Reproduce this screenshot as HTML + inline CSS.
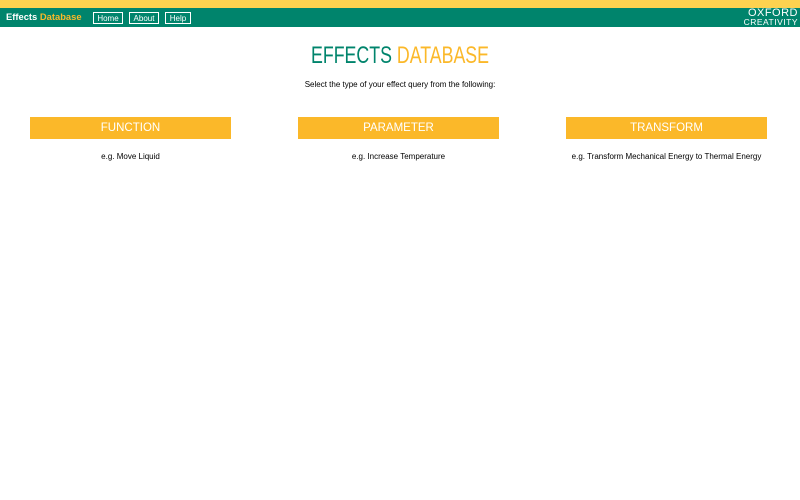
<!DOCTYPE html>
<html><head><style>
body{margin:0;width:800px;height:500px;background:#fff;font-family:"Liberation Sans",sans-serif;position:relative;overflow:hidden}
.top{position:absolute;left:0;top:0;width:800px;height:8px;background:#fdd250}
.nav{position:absolute;left:0;top:8px;width:800px;height:19px;background:#00846c}
.brand{position:absolute;left:6px;top:3px;font-size:9.4px;font-weight:bold;color:#fff}
.brand span{color:#fbb829}
.btn{position:absolute;top:4px;height:10px;border:1px solid #fff;color:#fff;font-size:8px;line-height:11px;text-align:center}
.logo{position:absolute;right:2px;top:1px;color:#fff;font-size:11px;line-height:9px;text-align:right;letter-spacing:0.5px}
h1{position:absolute;top:42px;left:0;width:800px;text-align:center;margin:0;font-weight:normal;font-size:24px;color:#00846c;transform:scaleX(0.74)}
h1 span{color:#fbb829}
.sub{position:absolute;top:80px;width:800px;text-align:center;font-size:8px}
.box{position:absolute;top:117px;width:201px;height:22px;background:#fbb829;color:#fff;font-size:11.5px;line-height:23px;text-align:center}
.ex{position:absolute;top:152px;width:201px;text-align:center;font-size:8px}
</style></head><body>
<div class="top"></div>
<div class="nav">
<div class="brand">Effects <span>Database</span></div>
<div class="btn" style="left:93px;width:28px">Home</div>
<div class="btn" style="left:129px;width:28px">About</div>
<div class="btn" style="left:165px;width:24px">Help</div>
<div class="logo">OXFORD<br><span style="font-size:8.5px">CREATIVITY</span></div>
</div>
<h1>EFFECTS <span>DATABASE</span></h1>
<div class="sub">Select the type of your effect query from the following:</div>
<div class="box" style="left:30px">FUNCTION</div>
<div class="box" style="left:298px">PARAMETER</div>
<div class="box" style="left:566px">TRANSFORM</div>
<div class="ex" style="left:30px">e.g. Move Liquid</div>
<div class="ex" style="left:298px">e.g. Increase Temperature</div>
<div class="ex" style="left:546px;width:241px">e.g. Transform Mechanical Energy to Thermal Energy</div>
</body></html>
